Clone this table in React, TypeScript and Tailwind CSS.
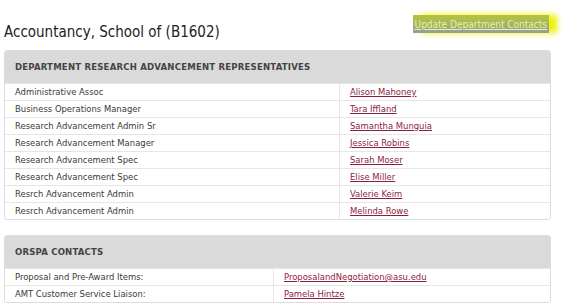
import React from "react";

interface Contact {
  role: string;
  name: string;
}

const reps: Contact[] = [
  { role: "Administrative Assoc", name: "Alison Mahoney" },
  { role: "Business Operations Manager", name: "Tara Iffland" },
  { role: "Research Advancement Admin Sr", name: "Samantha Munguia" },
  { role: "Research Advancement Manager", name: "Jessica Robins" },
  { role: "Research Advancement Spec", name: "Sarah Moser" },
  { role: "Research Advancement Spec", name: "Elise Miller" },
  { role: "Resrch Advancement Admin", name: "Valerie Keim" },
  { role: "Resrch Advancement Admin", name: "Melinda Rowe" },
];

const orspa: Contact[] = [
  { role: "Proposal and Pre-Award Items:", name: "ProposalandNegotiation@asu.edu" },
  { role: "AMT Customer Service Liaison:", name: "Pamela Hintze" },
];

// One bordered block: grey heading band, then two-column rows
const ContactTable = ({
  title,
  rows,
  splitClass,
}: {
  title: string;
  rows: Contact[];
  splitClass: string;
}) => (
  <div className="border border-[#dcdcdc] rounded-[3px] overflow-hidden">
    <div className="bg-[#dadada] h-[32px] flex items-center pl-[10px] font-bold text-[9.5px] text-[#444] tracking-[0.2px]">
      {title}
    </div>
    {rows.map((r, i) => (
      <div
        key={i}
        className="flex h-[17px] items-center bg-white border-t border-[#e6e6e6] text-[9.4px]"
      >
        <div className={`${splitClass} pl-[10px] h-full flex items-center border-r border-[#e6e6e6] text-[#3a3a3a]`}>
          {r.role}
        </div>
        <div className="flex-1 pl-[10px]">
          <a href="#" className="text-[#8c1d40] underline">
            {r.name}
          </a>
        </div>
      </div>
    ))}
  </div>
);

export default function App() {
  return (
    <div className="w-[562px] h-[306px] bg-white font-['DejaVu_Sans_Condensed','DejaVu_Sans',sans-serif] overflow-hidden">
      <div className="pl-[4px] pr-[13px] pt-[15px] flex justify-between items-start h-[50px]">
        <h1 className="text-[15px] text-[#222] mt-[8px] leading-[18px]">
          Accountancy, School of (B1602)
        </h1>
        <a
          href="#"
          className="h-[18px] px-[2px] flex items-center text-[10px] text-[#eef57a] underline bg-linear-to-b from-[#b9c51a] to-[#8e9fa3] shadow-[8px_0_6px_#eef000]"
        >
          Update Department Contacts
        </a>
      </div>
      <div className="px-[4px] w-[555px]">
        <ContactTable
          title="DEPARTMENT RESEARCH ADVANCEMENT REPRESENTATIVES"
          rows={reps}
          splitClass="w-[335px]"
        />
        <div className="h-[15px]" />
        <ContactTable title="ORSPA CONTACTS" rows={orspa} splitClass="w-[269px]" />
      </div>
    </div>
  );
}
